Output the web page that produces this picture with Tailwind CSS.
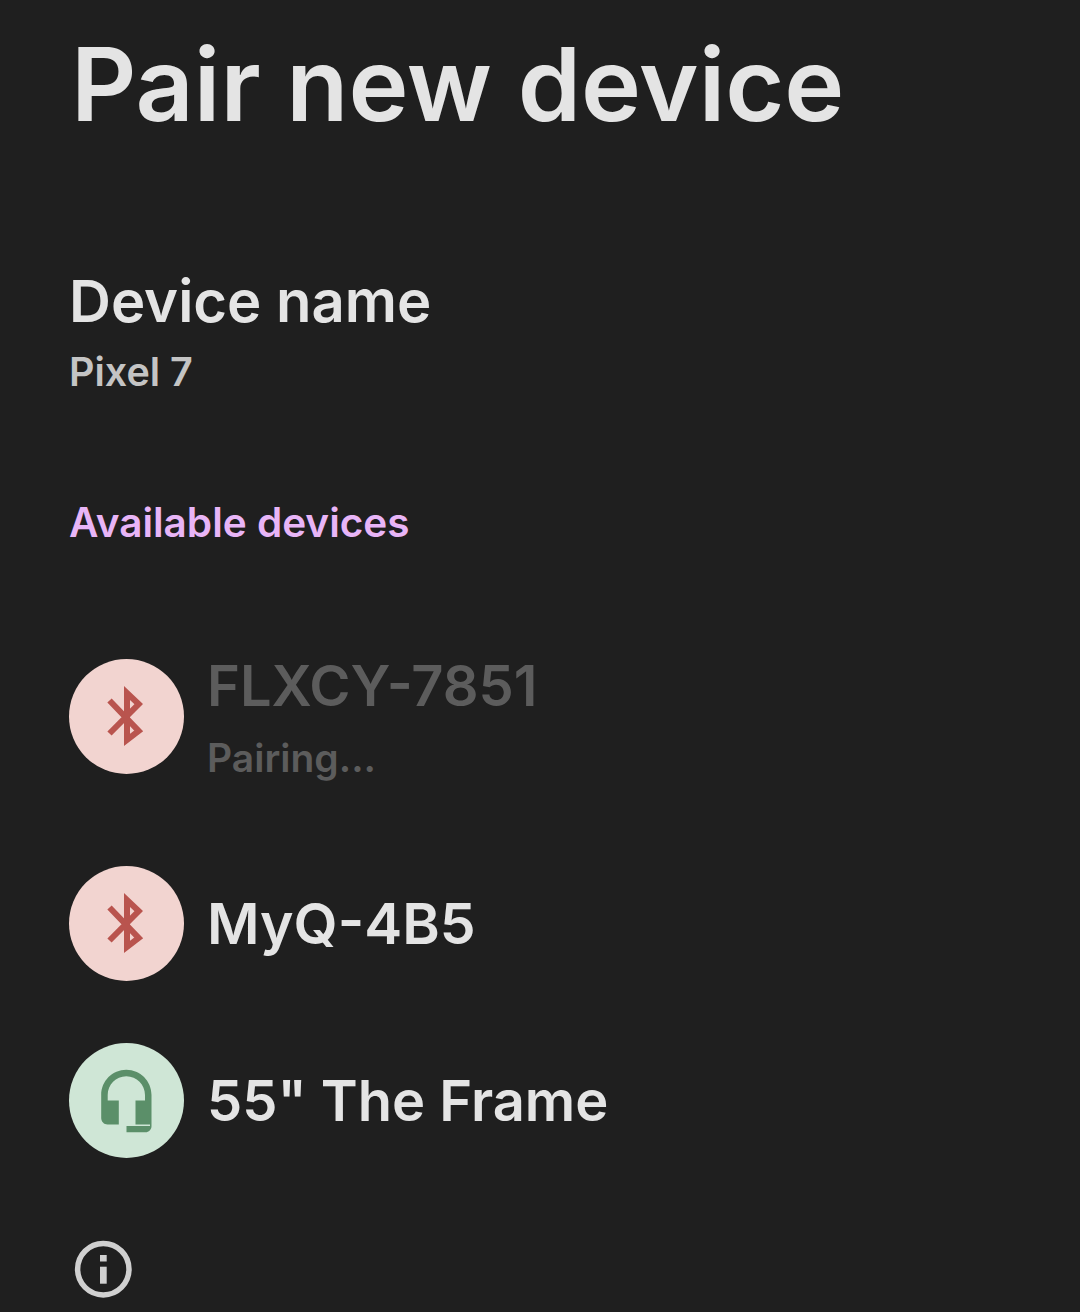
<!DOCTYPE html>
<html lang="en">
<head>
    <meta charset="UTF-8">
    <title>Pair new device</title>
    <script src="https://cdn.jsdelivr.net/npm/@tailwindcss/browser@4"></script>
</head>
<body class="bg-[#1f1f1f] font-['Inter',sans-serif] font-semibold">
    <div class="w-[1080px] h-[1312px] overflow-hidden pl-[69px]">
        <h1 class="pl-[2px] pt-[21px] h-[125px] text-[101.5px] leading-[126px] text-[#e4e4e4]">Pair new device</h1>

        <!-- Device name -->
        <div class="mt-[142px]">
            <p class="text-[58px] leading-[68px] text-[#e4e4e4]">Device name</p>
            <p class="mt-[13px] text-[39.5px] leading-[48px] text-[#c4c4c4]">Pixel 7</p>
        </div>

        <p class="mt-[102px] text-[40.5px] leading-[50px] text-[#e8b5f7]">Available devices</p>

        <!-- Devices -->
        <div class="mt-[111px] flex items-center gap-[23px] h-[115px]">
            <div class="w-[115px] h-[115px] rounded-full bg-[#f2d4d0] flex items-center justify-center">
                <svg class="w-[68px] h-[68px] fill-none stroke-[#b9544e] stroke-[6]" viewBox="0 0 68 68"><path d="M16.5 17.5 45.7 48 34 57V10L45.7 21 16.5 50.5"/></svg>
            </div>
            <div>
                <p class="text-[56px] leading-[68px] text-[#5c5c5c]">FLXCY-7851</p>
                <p class="mt-[14px] text-[39px] leading-[48px] text-[#5c5c5c]">Pairing...</p>
            </div>
        </div>

        <div class="mt-[92px] flex items-center gap-[23px] h-[115px]">
            <div class="w-[115px] h-[115px] rounded-full bg-[#f2d4d0] flex items-center justify-center">
                <svg class="w-[68px] h-[68px] fill-none stroke-[#b9544e] stroke-[6]" viewBox="0 0 68 68"><path d="M16.5 17.5 45.7 48 34 57V10L45.7 21 16.5 50.5"/></svg>
            </div>
            <p class="text-[57px] leading-[68px] text-[#e4e4e4]">MyQ-4B5</p>
        </div>

        <div class="mt-[62px] flex items-center gap-[23px] h-[115px]">
            <div class="w-[115px] h-[115px] rounded-full bg-[#cfe6d6] flex items-center justify-center">
                <svg class="w-[68px] h-[68px] fill-[#5b8f69]" viewBox="0 0 68 68"><path d="M33.3 2.8C19.4 2.8 8.2 14 8.2 28V51C8.2 54.6 11 57.5 14.5 57.5H25.8V33.5H14.7V28C14.7 17.6 22.9 9.3 33.3 9.3S52 17.6 52 28V33.5H42.5V57.5H57V59H33.5V65.2H52.5C55.8 65.2 58.5 62.5 58.5 59.2V28C58.5 14 47.2 2.8 33.3 2.8Z"/></svg>
            </div>
            <p class="text-[56px] leading-[68px] text-[#e4e4e4]">55" The Frame</p>
        </div>

        <svg class="mt-[82px] ml-[5px] w-[60px] h-[60px]" viewBox="0 0 60 60">
            <circle cx="29.3" cy="29.2" r="25.7" fill="none" stroke="#d0d0d0" stroke-width="5.5"/>
            <rect x="26" y="15" width="6.7" height="6.5" fill="#d0d0d0"/>
            <rect x="26" y="26.7" width="6.7" height="17" fill="#d0d0d0"/>
        </svg>
    </div>
</body>
</html>
